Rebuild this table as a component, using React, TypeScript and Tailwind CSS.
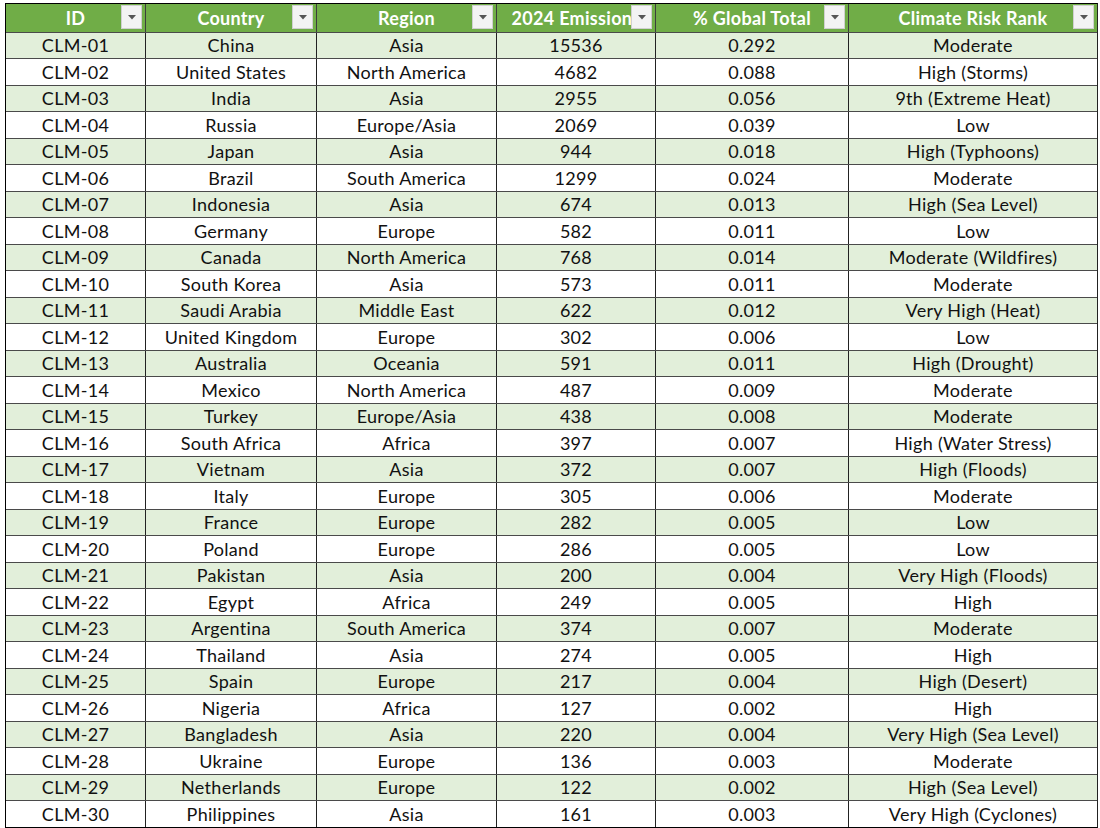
import React from 'react';

type Row = [string, string, string, string, string, string];

const rows: Row[] = [
  ['CLM-01', 'China', 'Asia', '15536', '0.292', 'Moderate'],
  ['CLM-02', 'United States', 'North America', '4682', '0.088', 'High (Storms)'],
  ['CLM-03', 'India', 'Asia', '2955', '0.056', '9th (Extreme Heat)'],
  ['CLM-04', 'Russia', 'Europe/Asia', '2069', '0.039', 'Low'],
  ['CLM-05', 'Japan', 'Asia', '944', '0.018', 'High (Typhoons)'],
  ['CLM-06', 'Brazil', 'South America', '1299', '0.024', 'Moderate'],
  ['CLM-07', 'Indonesia', 'Asia', '674', '0.013', 'High (Sea Level)'],
  ['CLM-08', 'Germany', 'Europe', '582', '0.011', 'Low'],
  ['CLM-09', 'Canada', 'North America', '768', '0.014', 'Moderate (Wildfires)'],
  ['CLM-10', 'South Korea', 'Asia', '573', '0.011', 'Moderate'],
  ['CLM-11', 'Saudi Arabia', 'Middle East', '622', '0.012', 'Very High (Heat)'],
  ['CLM-12', 'United Kingdom', 'Europe', '302', '0.006', 'Low'],
  ['CLM-13', 'Australia', 'Oceania', '591', '0.011', 'High (Drought)'],
  ['CLM-14', 'Mexico', 'North America', '487', '0.009', 'Moderate'],
  ['CLM-15', 'Turkey', 'Europe/Asia', '438', '0.008', 'Moderate'],
  ['CLM-16', 'South Africa', 'Africa', '397', '0.007', 'High (Water Stress)'],
  ['CLM-17', 'Vietnam', 'Asia', '372', '0.007', 'High (Floods)'],
  ['CLM-18', 'Italy', 'Europe', '305', '0.006', 'Moderate'],
  ['CLM-19', 'France', 'Europe', '282', '0.005', 'Low'],
  ['CLM-20', 'Poland', 'Europe', '286', '0.005', 'Low'],
  ['CLM-21', 'Pakistan', 'Asia', '200', '0.004', 'Very High (Floods)'],
  ['CLM-22', 'Egypt', 'Africa', '249', '0.005', 'High'],
  ['CLM-23', 'Argentina', 'South America', '374', '0.007', 'Moderate'],
  ['CLM-24', 'Thailand', 'Asia', '274', '0.005', 'High'],
  ['CLM-25', 'Spain', 'Europe', '217', '0.004', 'High (Desert)'],
  ['CLM-26', 'Nigeria', 'Africa', '127', '0.002', 'High'],
  ['CLM-27', 'Bangladesh', 'Asia', '220', '0.004', 'Very High (Sea Level)'],
  ['CLM-28', 'Ukraine', 'Europe', '136', '0.003', 'Moderate'],
  ['CLM-29', 'Netherlands', 'Europe', '122', '0.002', 'High (Sea Level)'],
  ['CLM-30', 'Philippines', 'Asia', '161', '0.003', 'Very High (Cyclones)'],
];

const headers = ['ID', 'Country', 'Region', '2024 Emissions', '% Global Total', 'Climate Risk Rank'];
const widths = ['w-[140px]', 'w-[171px]', 'w-[180px]', 'w-[159px]', 'w-[193px]', 'w-[248px]'];

function FilterButton() {
  return (
    <div className="absolute right-[3px] top-[1px] w-[21px] h-[24px] bg-[#f3f3f3] border border-[#d0d0d0] flex items-center justify-center">
      <svg width="8" height="5" viewBox="0 0 8 5">
        <path d="M0 0 L8 0 L4 4.5 Z" fill="#555" />
      </svg>
    </div>
  );
}

export default function App() {
  return (
    <div className="w-[1100px] h-[828px] bg-white overflow-hidden pt-[3px] pl-[5px]" style={{ fontFamily: 'Lato, "Open Sans", sans-serif' }}>
      <div className="inline-flex flex-col border border-black border-r-[#222]">
        {/* header */}
        <div className="flex h-[28px] bg-[#70ad47]">
          {headers.map((h, i) => (
            <div
              key={h}
              className={`${widths[i]} relative overflow-hidden flex items-center justify-center text-white font-bold text-[18px] tracking-[0.3px] whitespace-nowrap ${i < 5 ? 'border-r border-[#3d3d3d]' : ''}`}
            >
              {h}
              <FilterButton />
            </div>
          ))}
        </div>
        {rows.map((r, ri) => (
          <div
            key={r[0]}
            className={`flex ${ri % 2 === 0 ? 'bg-[#e2efda] h-[26px]' : 'bg-white h-[27px]'} border-t border-[#4a4a4a]`}
          >
            {r.map((c, ci) => (
              <div
                key={ci}
                className={`${widths[ci]} flex items-center justify-center text-[18px] tracking-[0.3px] text-[#111] whitespace-nowrap ${ci < 5 ? 'border-r border-[#222]' : ''}`}
              >
                {c}
              </div>
            ))}
          </div>
        ))}
      </div>
    </div>
  );
}
